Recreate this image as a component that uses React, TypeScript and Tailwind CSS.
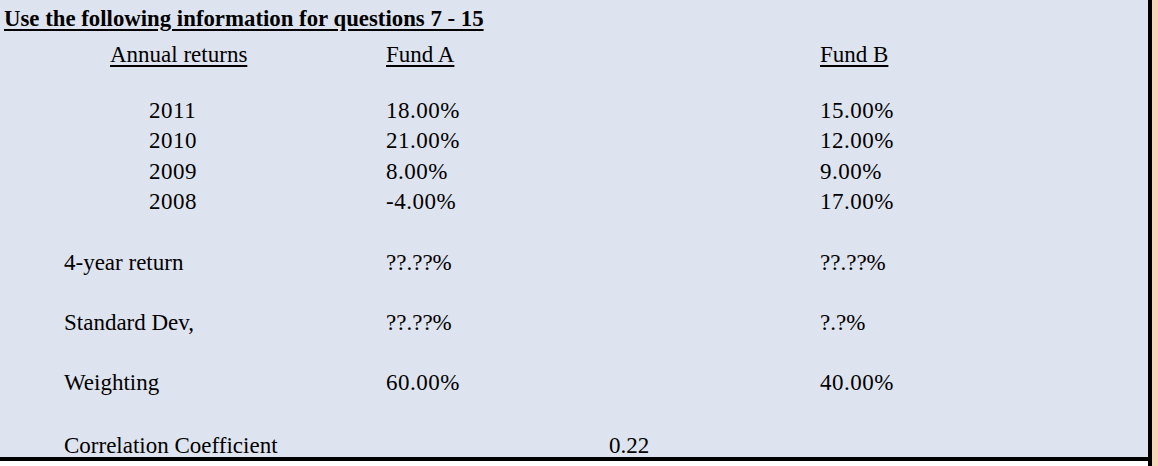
import React from "react";

const Row = ({ h = "h-[30px]", children }: { h?: string; children?: React.ReactNode }) => (
  <div className={`flex items-center shrink-0 ${h}`}>{children}</div>
);

export default function App() {
  const data: [string, string, string, string][] = [
    ["2011", "18.00%", "15.00%", "h-[30px]"],
    ["2010", "21.00%", "12.00%", "h-[31px]"],
    ["2009", "8.00%", "9.00%", "h-[30px]"],
    ["2008", "-4.00%", "17.00%", "h-[30px]"],
  ];
  return (
    <div className="w-[1158px] h-[466px] flex bg-white" style={{ fontFamily: '"Liberation Serif", "Times New Roman", serif' }}>
      <div className="flex flex-col w-[1152px]">
        <div className="flex h-[457px]">
          <div className="w-[1148px] bg-[#dee4ef] text-black text-[23px] leading-none flex flex-col overflow-hidden">
            <Row h="h-[39px]">
              <span className="pl-[4px] text-[22.8px] font-bold underline decoration-2 underline-offset-[3px]">
                Use the following information for questions 7 - 15
              </span>
            </Row>
            <Row h="h-[30px]">
              <div className="w-[386px] pl-[110px]"><span className="underline underline-offset-[3px]">Annual returns</span></div>
              <div className="w-[434px]"><span className="underline underline-offset-[3px]">Fund A</span></div>
              <div><span className="underline underline-offset-[3px]">Fund B</span></div>
            </Row>
            <Row h="h-[26px]" />
            {data.map(([y, a, b, h]) => (
              <Row key={y} h={h}>
                <div className="w-[386px] pl-[149px] tracking-[0.5px]">{y}</div>
                <div className="w-[434px] tracking-[0.5px]">{a}</div>
                <div className="tracking-[0.5px]">{b}</div>
              </Row>
            ))}
            <Row h="h-[31px]" />
            <Row>
              <div className="w-[386px] pl-[64px]">4-year return</div>
              <div className="w-[434px]">??.??%</div>
              <div>??.??%</div>
            </Row>
            <Row />
            <Row>
              <div className="w-[386px] pl-[64px]">Standard Dev,</div>
              <div className="w-[434px]">??.??%</div>
              <div>?.?%</div>
            </Row>
            <Row />
            <Row>
              <div className="w-[386px] pl-[64px]">Weighting</div>
              <div className="w-[434px] tracking-[0.5px]">60.00%</div>
              <div className="tracking-[0.5px]">40.00%</div>
            </Row>
            <Row h="h-[35px]" />
            <Row h="h-[26px]">
              <div className="w-[386px] pl-[64px]">Correlation Coefficient</div>
              <div className="w-[223px]"></div>
              <div>0.22</div>
            </Row>
          </div>
          <div className="w-[4px] bg-black" />
        </div>
        <div className="h-[4px] bg-black" />
        <div className="flex-1 flex">
          <div className="w-[1148px] bg-white" />
          <div className="w-[4px] bg-black" />
        </div>
      </div>
      <div className="w-[6px] bg-[#f7d7b7]" />
    </div>
  );
}
